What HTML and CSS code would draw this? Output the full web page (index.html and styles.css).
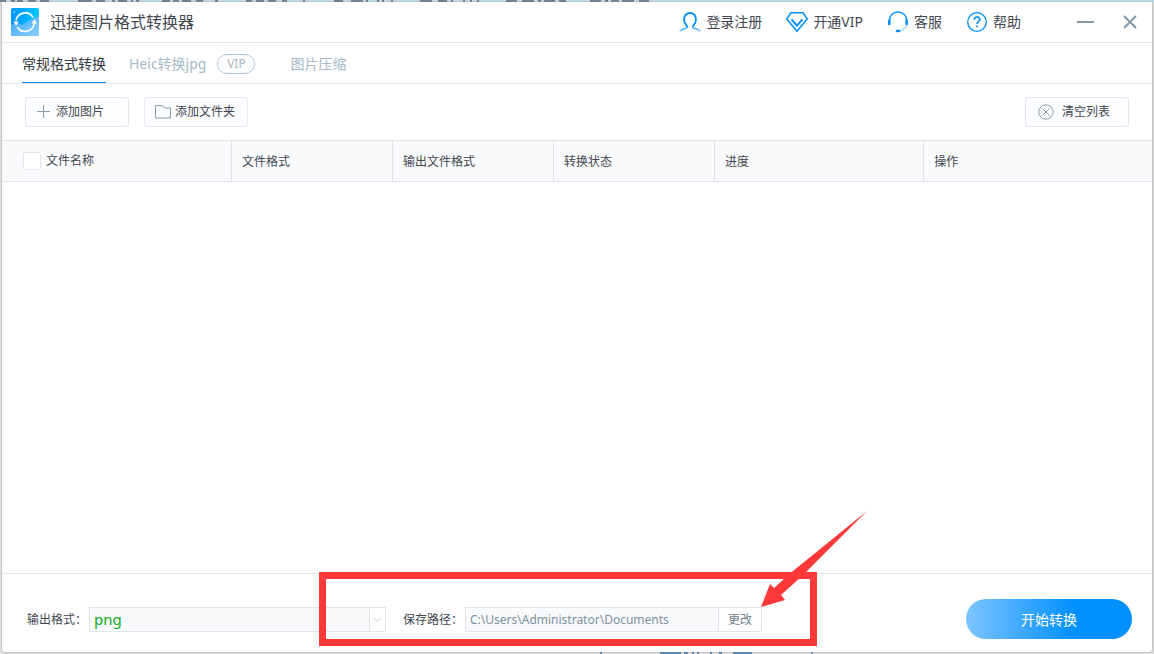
FILE: index.html
```html
<!DOCTYPE html>
<html lang="zh-CN">
<head>
<meta charset="utf-8">
<meta name="viewport" content="width=device-width, initial-scale=1">
<title>迅捷图片格式转换器</title>
<link rel="stylesheet" href="styles.css">
</head>
<body>
<svg class="desktop" aria-hidden="true">
  <path d="M0 1h6M11 1h4M17 1h6M28 1h8M40 1h9M78 1h14M96 1h9M112 1h3M118 1h9M131 1h2M136 1h3M162 1h8M173 1h6M182 1h9M196 1h7M215 1h3M246 1h6M256 1h8M268 1h8M282 1h5M303 1h2M334 1h9M351 1h12M366 1h2M377 1h2M382 1h2M391 1h2M420 1h12M438 1h9M451 1h2M463 1h2M470 1h2M477 1h2M506 1h11M522 1h12M538 1h3M544 1h11M559 1h7M590 1h11M605 1h3M611 1h8M622 1h12M639 1h10" stroke="#26333a" stroke-width="1"/>
</svg>
<svg class="desktop bottom" aria-hidden="true">
  <path d="M600 1h2M660 1h21M684 1h4M692 1h2M697 1h2M710 1h2M719 1h3M733 1h19M811 1h2" stroke="#5c8ab5" stroke-width="2"/>
</svg>
<main class="window">
  <header class="titlebar">
    <svg class="logo" viewBox="0 0 28 28" aria-hidden="true">
      <defs>
        <linearGradient id="sky" x1="0" y1="0" x2="1" y2="0"><stop offset="0" stop-color="#0094ff"/><stop offset="1" stop-color="#00c8ff"/></linearGradient>
        <linearGradient id="sea" x1="0" y1="0" x2="1" y2="1"><stop offset="0" stop-color="#35a4ff"/><stop offset="1" stop-color="#8ccfff"/></linearGradient>
      </defs>
      <rect width="28" height="28" rx="2" fill="url(#sky)"/>
      <path d="M0 17l6-3 5 3 8-5 9-4v18a2 2 0 0 1-2 2H2a2 2 0 0 1-2-2z" fill="url(#sea)"/>
      <circle cx="3" cy="4" r="1.3" fill="#63c5ff"/>
      <g fill="none" stroke="#fff" stroke-width="1.7"><path d="M5 12.500a9.200 9.200 0 0 1 17-3M23.200 15a9.200 9.200 0 0 1-17 4"/></g>
      <path d="M20.500 15.500l3-4.500 2.500 4.500zM2.500 13.500h5L5 18z" fill="#fff"/>
    </svg>
    <h1 class="title">迅捷图片格式转换器</h1>
    <nav class="menu">
      <button class="menu-item" type="button">
        <svg width="22" height="22" viewBox="0 0 22 22" fill="none" aria-hidden="true"><defs><linearGradient id="fade" x1="0" y1="0" x2="0" y2="1"><stop offset=".65" stop-color="#0090ff"/><stop offset="1" stop-color="#9bd1ff"/></linearGradient></defs><path d="M1 20.500c1-2.500 3.500-2.500 6.500-3.500 1-.5 1-1.500 0-2.500C5.500 12.500 5 10.500 5 8a6 6 0 0 1 12 0c0 2.500-.5 4.500-2.500 6.500-1 1-1 2 0 2.500 3 1 5.500 1 6.500 3.500" stroke="url(#fade)" stroke-width="1.8"/></svg>
        登录注册</button>
      <button class="menu-item" type="button">
        <svg width="22" height="22" viewBox="0 0 22 22" fill="none" stroke="#0090ff" aria-hidden="true"><path d="M5 1.800h12l4.300 6.200L11 20.300.7 8z" stroke-width="1.500"/><path d="M5.500 8.500l5.500 6 5.500-6" stroke-width="1.900"/></svg>
        开通VIP</button>
      <button class="menu-item" type="button">
        <svg width="22" height="22" viewBox="0 0 22 22" fill="none" stroke="#0090ff" aria-hidden="true"><path d="M2.500 9a8.500 8 0 0 1 17 0" stroke-width="1.300"/><path d="M19.500 14c-1 3-3.500 5.500-7 6" stroke="#75c0ff"/><path d="M2.300 9.500v3.500M19.700 9.500v3.500" stroke-width="2.600" stroke-linecap="round"/><path d="M10 20h2" stroke-width="2.600" stroke-linecap="round"/></svg>
        客服</button>
      <button class="menu-item" type="button">
        <svg width="22" height="22" viewBox="0 0 22 22" fill="none" stroke="#0090ff" aria-hidden="true"><circle cx="11" cy="11" r="9.300" stroke-width="1.300"/><path d="M8.300 8.800c0-3.700 5.500-3.700 5.500-.4 0 2-2.700 2.200-2.700 4.600M11.100 14.500v1.800" stroke-width="1.700"/></svg>
        帮助</button>
    </nav>
    <div class="controls">
      <button class="control" type="button" aria-label="最小化"><svg width="18" height="18" viewBox="0 0 18 18" stroke="#8297a7" stroke-width="2" aria-hidden="true"><path d="M0 9h17"/></svg></button>
      <button class="control" type="button" aria-label="关闭"><svg width="18" height="18" viewBox="0 0 18 18" stroke="#8297a7" stroke-width="1.900" aria-hidden="true"><path d="M3 3l12 12M15 3L3 15"/></svg></button>
    </div>
  </header>

  <nav class="tabs">
    <button class="tab active" type="button">常规格式转换</button>
    <button class="tab" type="button">Heic转换jpg <span class="vip">VIP</span></button>
    <button class="tab last" type="button">图片压缩</button>
  </nav>

  <div class="toolbar">
    <button class="tool" type="button"><svg width="16" height="16" viewBox="0 0 16 16" fill="none" stroke="#8c9ca9" aria-hidden="true"><path d="M1 7.500h13M7.500 1v13"/></svg>添加图片</button>
    <button class="tool" type="button"><svg width="16" height="16" viewBox="0 0 16 16" fill="none" stroke="#8c9ca9" aria-hidden="true"><path d="M.5 1.500H7l3 2.500h5.500v10H.5z"/></svg>添加文件夹</button>
    <button class="tool clear" type="button"><svg width="16" height="16" viewBox="0 0 16 16" fill="none" stroke="#8c9ca9" aria-hidden="true"><circle cx="8" cy="8" r="7.200"/><path d="M4.500 4.500l7 7M11.500 4.500l-7 7"/></svg>清空列表</button>
  </div>

  <section class="list">
    <table class="files">
      <thead>
        <tr>
          <th class="name"><label class="pick"><input class="check" type="checkbox">文件名称</label></th>
          <th class="mid">文件格式</th>
          <th class="mid">输出文件格式</th>
          <th class="mid">转换状态</th>
          <th class="progress">进度</th>
          <th>操作</th>
        </tr>
      </thead>
    </table>
  </section>

  <footer class="footer">
    <label class="label" for="format">输出格式：</label>
    <div class="select-box">
      <select class="format" id="format"><option>png</option></select>
      <svg class="caret" viewBox="0 0 16 23" fill="none" stroke="#c3c9d6" aria-hidden="true"><path d="M4.500 10.500l3.500 3 3.500-3"/></svg>
    </div>
    <label class="label path-label" for="path">保存路径：</label>
    <input class="path" id="path" type="text" value="C:\Users\Administrator\Documents">
    <button class="change" type="button">更改</button>
    <button class="start" type="button">开始转换</button>
    <div class="highlight"></div>
    <svg class="arrow" viewBox="0 0 106 97" aria-hidden="true"><path d="M106 0L32 60 13 77 9 73 0 96 24 89 20 84 41 65z" fill="#fc3838"/></svg>
  </footer>
</main>
</body>
</html>
```
FILE: styles.css
```css
* {
  box-sizing: border-box;
}

body {
  margin: 0;
  min-height: 100vh;
  display: flex;
  position: relative;
  padding: 2px;
  background: linear-gradient(#b4dcea 0 2px, #dedede 2px);
  font-family: "Noto Sans", "Noto Sans CJK SC", sans-serif;
  font-size: 12px;
  line-height: 18px;
  color: #424750;
}

button,
input,
select {
  font: inherit;
  color: inherit;
  margin: 0;
}

button {
  padding: 0;
  border: 0;
  background: none;
  white-space: nowrap;
}

svg {
  flex: none;
}

.desktop {
  position: absolute;
  top: 0;
  left: 0;
  width: 100%;
  height: 2px;
}

.desktop.bottom {
  top: auto;
  bottom: 0;
}

.window {
  flex: 1;
  min-width: 0;
  display: flex;
  flex-direction: column;
  background: #fff;
  border-radius: 0 0 3px 3px;
  box-shadow: 0 0 0 1px #c3c6c8;
}

.titlebar {
  display: flex;
  align-items: center;
  height: 41px;
  padding: 0 13px 0 9px;
  border-bottom: 1px solid #e2e4ec;
}

.logo {
  width: 28px;
  height: 28px;
}

.title {
  margin: 0 auto 0 11px;
  font-size: 16px;
  line-height: 24px;
  font-weight: 400;
  white-space: nowrap;
}

.menu {
  display: flex;
  gap: 24px;
  font-size: 14px;
}

.menu-item {
  display: flex;
  align-items: center;
  gap: 5px;
}

.controls {
  display: flex;
  gap: 26px;
  margin-left: 56px;
}

.control {
  display: flex;
}

.tabs {
  display: flex;
  height: 41px;
  padding: 0 20px;
  gap: 23px;
  border-bottom: 1px solid #e2e4ec;
  font-size: 14px;
}

.tab {
  display: flex;
  align-items: center;
  gap: 11px;
  padding-top: 2px;
  color: #a5b8c7;
  border-bottom: 1px solid transparent;
}

.tab.active {
  color: #333a42;
  border-bottom-color: #0090ff;
}

.tab.last {
  margin-left: 12px;
}

.vip {
  width: 38px;
  height: 20px;
  border: 1px solid #b0c1cf;
  border-radius: 10px;
  font-size: 12px;
}

.toolbar {
  display: flex;
  gap: 15px;
  padding: 13px 23px;
}

.tool {
  display: flex;
  align-items: center;
  gap: 4px;
  width: 104px;
  height: 30px;
  padding-left: 10px;
  border: 1px solid #e5e7ee;
  border-radius: 3px;
  background: #fcfdff;
}

.tool.clear {
  margin-left: auto;
  padding-left: 12px;
  gap: 8px;
}

.list {
  flex: 1;
}

.files {
  width: 100%;
  table-layout: fixed;
  border-collapse: separate;
  border-spacing: 0;
}

.files th {
  height: 42px;
  padding: 2px 10px 0;
  border: solid #dfe2ea;
  border-width: 1px 1px 1px 0;
  background: #f8fafc;
  font-weight: 400;
  text-align: left;
}

.files th:last-child {
  border-right: 0;
}

.files .name {
  width: 20%;
  padding: 0 0 0 21px;
}

.files .mid {
  width: 14%;
}

.files .progress {
  width: 18.2%;
}

.pick {
  display: flex;
  align-items: center;
  gap: 5px;
}

.check {
  appearance: none;
  width: 18px;
  height: 18px;
  border: 1px solid #e2e5ed;
  border-radius: 3px;
  background: #fff;
}

.footer {
  position: relative;
  display: flex;
  align-items: center;
  padding: 25px 20px 13px 25px;
  border-top: 1px solid #e2e4ec;
}

.label {
  width: 62px;
  padding-top: 2px;
  white-space: nowrap;
}

.select-box {
  position: relative;
  width: 297px;
}

.format {
  display: block;
  appearance: none;
  width: 100%;
  height: 25px;
  padding: 0 4px;
  border: 1px solid #e2e4ec;
  border-radius: 0;
  background: #f8fafc;
  color: #0cac20;
  font-size: 15px;
  line-height: 23px;
}

.caret {
  position: absolute;
  top: 1px;
  right: 1px;
  width: 16px;
  height: 23px;
  border-left: 1px solid #e2e4ec;
  background: #fff;
  pointer-events: none;
}

.path-label {
  margin-left: 17px;
}

.path {
  width: 253px;
  height: 25px;
  padding: 0 4px;
  border: 1px solid #e2e4ec;
  border-right: 0;
  background: #f8fafc;
  color: #7e91a0;
}

.change {
  width: 44px;
  height: 25px;
  padding-top: 2px;
  border: 1px solid #e2e4ec;
  color: #718391;
}

.start {
  width: 166px;
  height: 40px;
  padding-top: 2px;
  margin-left: auto;
  border-radius: 20px;
  background: linear-gradient(90deg, #7cc4ff, #0090ff 66%);
  color: #fff;
  font-size: 14px;
}

.highlight {
  position: absolute;
  top: -2px;
  left: 317px;
  width: 498px;
  height: 74px;
  border: 7px solid #fc3838;
  pointer-events: none;
}

.arrow {
  position: absolute;
  top: -63px;
  left: 759px;
  width: 106px;
  height: 97px;
  pointer-events: none;
}
```
